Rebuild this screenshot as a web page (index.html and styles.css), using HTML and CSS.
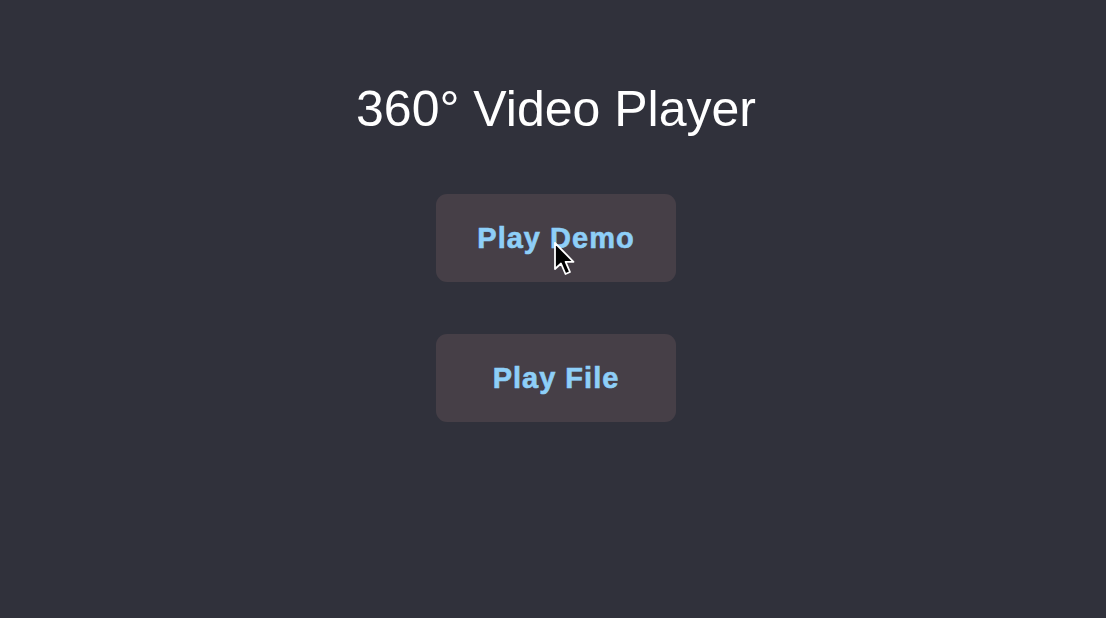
FILE: index.html
```html
<!DOCTYPE html>
<html>
<head>
<meta charset="utf-8">
<link rel="stylesheet" href="styles.css">
</head>
<body>
<main class="app">
  <h1 class="title">360° Video Player</h1>
  <div class="actions">
    <button class="btn">Play Demo</button>
    <button class="btn">Play File</button>
  </div>
</main>
<svg class="cursor" width="24" height="36" viewBox="0 0 24 36">
  <path d="M2 1 L2 27 L8 21.5 L12.5 32 L17 30 L12.6 19.8 L20.5 19.8 Z" fill="#000" stroke="#fff" stroke-width="1.8" stroke-linejoin="round"/>
</svg>
</body>
</html>
```
FILE: styles.css
```css
html, body {
  margin: 0;
  padding: 0;
  height: 100%;
}
body {
  background: #30313b;
  font-family: "Liberation Sans", Arial, sans-serif;
  overflow: hidden;
  position: relative;
}
.app {
  display: flex;
  flex-direction: column;
  align-items: center;
  padding-top: 81px;
  padding-left: 6px;
}
.title {
  margin: 0;
  font-size: 50px;
  font-weight: normal;
  color: #ffffff;
  line-height: 56px;
}
.actions {
  display: flex;
  flex-direction: column;
  gap: 52px;
  margin-top: 57px;
}
.btn {
  width: 240px;
  height: 88px;
  border: none;
  border-radius: 11px;
  background: #463f47;
  color: #8ecff8;
  font-family: "Liberation Sans", Arial, sans-serif;
  font-weight: bold;
  font-size: 29px;
  letter-spacing: 1px;
  -webkit-text-stroke: 0.6px #8ecff8;
  padding: 0;
}
.cursor {
  position: absolute;
  left: 553px;
  top: 242px;
}
```
